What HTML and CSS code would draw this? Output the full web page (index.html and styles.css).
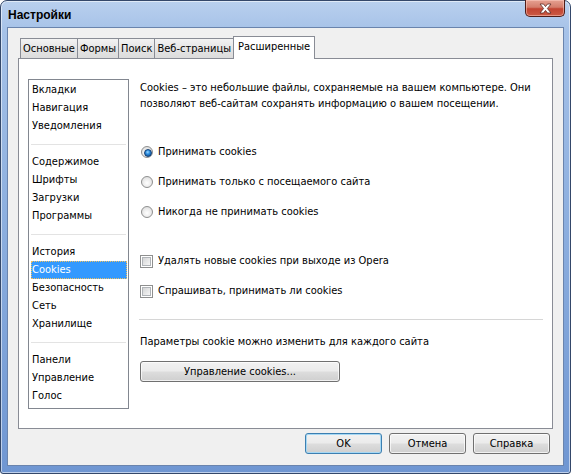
FILE: index.html
```html
<!DOCTYPE html>
<html lang="ru">
<head>
<meta charset="utf-8">
<title>Настройки</title>
<link rel="stylesheet" href="styles.css">
</head>
<body>
<div class="window">
  <div class="titlebar">
    <span class="title">Настройки</span>
    <span class="close"><svg width="15" height="11" viewBox="0 0 15 11"><path d="M2 1 L5.5 1 L7.5 3.6 L9.5 1 L13 1 L9.4 5.5 L13 10 L9.5 10 L7.5 7.4 L5.5 10 L2 10 L5.6 5.5 Z" fill="#fff" stroke="#5a2a25" stroke-width="0.8" stroke-linejoin="round"/></svg></span>
  </div>
  <div class="client">
    <div class="tabs">
      <div class="tab">Основные</div>
      <div class="tab">Формы</div>
      <div class="tab">Поиск</div>
      <div class="tab">Веб-страницы</div>
      <div class="tab active">Расширенные</div>
    </div>
    <div class="panel">
      <ul class="list">
        <li>Вкладки</li>
        <li>Навигация</li>
        <li>Уведомления</li>
        <li class="sep"></li>
        <li>Содержимое</li>
        <li>Шрифты</li>
        <li>Загрузки</li>
        <li>Программы</li>
        <li class="sep"></li>
        <li>История</li>
        <li class="sel">Cookies</li>
        <li>Безопасность</li>
        <li>Сеть</li>
        <li>Хранилище</li>
        <li class="sep"></li>
        <li>Панели</li>
        <li>Управление</li>
        <li>Голос</li>
      </ul>
      <div class="content">
        <p class="desc">Cookies – это небольшие файлы, сохраняемые на вашем компьютере. Они позволяют веб-сайтам сохранять информацию о вашем посещении.</p>
        <div class="opt radio first checked"><span class="rb"></span>Принимать cookies</div>
        <div class="opt radio"><span class="rb"></span>Принимать только с посещаемого сайта</div>
        <div class="opt radio"><span class="rb"></span>Никогда не принимать cookies</div>
        <div class="opt check firstcheck"><span class="cb"></span>Удалять новые cookies при выходе из Opera</div>
        <div class="opt check"><span class="cb"></span>Спрашивать, принимать ли cookies</div>
        <div class="rule"></div>
        <p class="note">Параметры cookie можно изменить для каждого сайта</p>
        <button class="btn wide">Управление cookies...</button>
      </div>
    </div>
    <div class="actions">
      <button class="btn default">OK</button>
      <button class="btn">Отмена</button>
      <button class="btn">Справка</button>
    </div>
  </div>
</div>
</body>
</html>
```

FILE: styles.css
```css
* { box-sizing: border-box; }
html, body { margin: 0; padding: 0; background: #ffffff; }
body {
  font-family: "DejaVu Sans Condensed", "Liberation Sans", Arial, sans-serif;
  font-size: 11px;
  color: #000;
}
.window {
  width: 571px;
  height: 474px;
  border: 1px solid #34486a;
  border-radius: 7px 7px 3px 3px;
  background: linear-gradient(to bottom, #b9d0ee 0px, #a6c2e8 30px, #8fb1e0 200px, #6f96d2 474px);
  padding: 0 6px 7px 6px;
  display: flex;
  flex-direction: column;
  box-shadow: inset 0 0 0 1px rgba(255,255,255,0.55);
}
.titlebar {
  height: 26px;
  display: flex;
  align-items: flex-start;
  justify-content: space-between;
}
.title {
  font-family: "Liberation Sans", Arial, sans-serif;
  font-weight: bold;
  font-size: 12px;
  margin-top: 7px;
  margin-left: 1px;
  color: #000;
}
.close {
  width: 40px;
  height: 17px;
  margin-right: -1px;
  margin-top: -1px;
  border: 1px solid #4f1d18;
  border-top: none;
  border-radius: 0 0 5px 5px;
  background: linear-gradient(to bottom, #e6a192 0%, #d47d6c 45%, #c24432 55%, #cb5a44 100%);
  box-shadow: inset 0 0 0 1px rgba(255,210,200,0.5);
  display: flex;
  align-items: center;
  justify-content: center;
}
.client {
  flex: 1;
  background: #f0f0f0;
  border: 1px solid #6a84ad;
  display: flex;
  flex-direction: column;
  padding: 8px 13px 0 10px;
}
.tabs {
  display: flex;
  align-items: flex-end;
  padding-left: 2px;
  height: 22px;
  position: relative;
  z-index: 1;
}
.tab {
  height: 20px;
  padding: 0 2px;
  border: 1px solid #898c95;
  border-bottom: none;
  margin-right: -1px;
  background: linear-gradient(to bottom, #f3f3f3, #e5e5e5 50%, #dcdcdc);
  line-height: 19px;
  white-space: nowrap;
}
.tab.active {
  background: #fff;
  padding: 0 4px;
  line-height: 20px;
  margin-bottom: -1px;
  height: 23px;
}
.panel {
  height: 371px;
  margin-right: -3px;
  background: #fff;
  border: 1px solid #898c95;
  display: flex;
  padding: 20px 8px 0 9px;
}
.list {
  list-style: none;
  margin: 0;
  padding: 1px;
  width: 101px;
  height: 330px;
  border: 1px solid #828790;
  flex: none;
}
.list li {
  height: 18px;
  line-height: 18px;
  padding-left: 2px;
  white-space: nowrap;
}
.list li.sep {
  position: relative;
}
.list li.sep::after {
  content: "";
  position: absolute;
  left: 1px;
  right: 1px;
  top: 9px;
  height: 1px;
  background: #e3e3e3;
}
.list li.sel {
  background: #3399ff;
  color: #fff;
  outline: 1px dotted #f0c060;
  outline-offset: -1px;
  margin: 0 0 0 1px;
  padding-left: 1px;
}
.content {
  flex: 1;
  margin-left: 11px;
  padding-top: 1px;
}
.desc {
  margin: 0;
  line-height: 16px;
}
.opt {
  height: 16px;
  line-height: 16px;
  display: flex;
  align-items: center;
  margin-top: 14px;
  white-space: nowrap;
}
.opt.first { margin-top: 32px; }
.opt.firstcheck { margin-top: 33px; }
.rb {
  width: 12px;
  height: 12px;
  border-radius: 50%;
  border: 1px solid #8e8f8f;
  background: radial-gradient(circle at 50% 60%, #ffffff 0, #f0f0f0 40%, #d4d4d4 100%);
  margin-right: 5px;
  margin-left: 1px;
  flex: none;
  position: relative;
}
.checked .rb::after {
  content: "";
  position: absolute;
  left: 2px;
  top: 2px;
  width: 6px;
  height: 6px;
  border-radius: 50%;
  background: radial-gradient(circle at 45% 35%, #9ad7ff 0, #2b8de0 40%, #0a3f7c 100%);
  border: 0.5px solid #123f74;
}
.cb {
  width: 13px;
  height: 13px;
  border: 1px solid #8e8f8f;
  background: #fff;
  margin-right: 5px;
  flex: none;
  position: relative;
}
.cb::after {
  content: "";
  position: absolute;
  left: 1px;
  top: 1px;
  right: 1px;
  bottom: 1px;
  border: 1px solid #b0b4b8;
  background: linear-gradient(135deg, #d4d5d6, #f6f6f6);
}
.rule {
  height: 1px;
  background: #d6d6d6;
  margin: 20px 0 0 -1px;
  width: 404px;
}
.note {
  margin: 14px 0 0 0;
  line-height: 16px;
}
.btn {
  font-family: "DejaVu Sans Condensed", "Liberation Sans", Arial, sans-serif;
  font-size: 11px;
  color: #000;
  height: 21px;
  padding: 0;
  border: 1px solid #707070;
  border-radius: 3px;
  background: linear-gradient(to bottom, #f2f2f2 0%, #ebebeb 48%, #dddddd 52%, #cfcfcf 100%);
  box-shadow: inset 0 0 0 1px rgba(255,255,255,0.7);
}
.btn.wide {
  width: 200px;
  margin-top: 11px;
  display: block;
}
.actions {
  display: flex;
  justify-content: flex-end;
  gap: 7px;
  margin-top: 4px;
}
.actions .btn { width: 77px; }
.btn.default {
  border-color: #3c7fb1;
  box-shadow: inset 0 0 0 1px #a6d8f4;
}
```
